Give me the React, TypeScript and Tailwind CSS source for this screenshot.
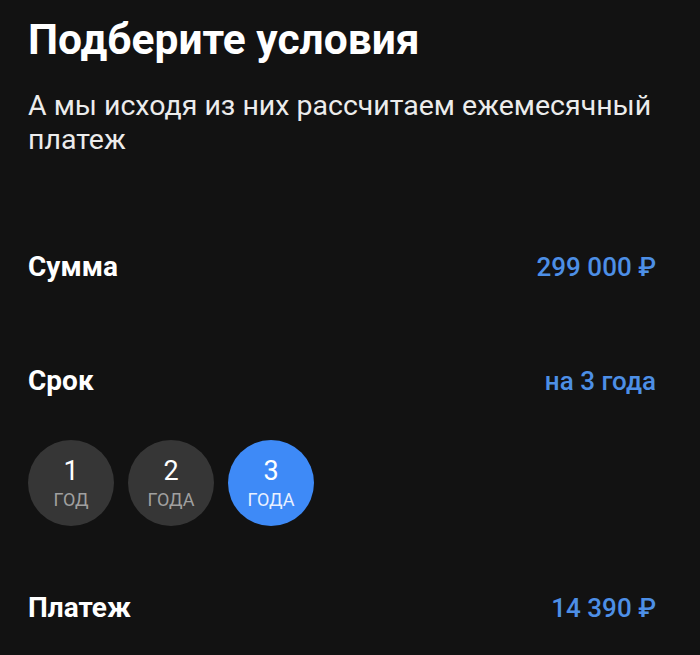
import { useState } from 'react';

const terms = [
    { value: 1, label: 'год' },
    { value: 2, label: 'года' },
    { value: 3, label: 'года' },
];

function Row({ label, value }: { label: string; value: string }) {
    return (
        <div className="flex items-center justify-between leading-[34px]">
            <span className="text-[28px] font-bold text-white">{label}</span>
            <span className="text-[26px] font-medium text-[#4d8fe6]">{value}</span>
        </div>
    );
}

export default function App() {
    const [term, setTerm] = useState(3);

    return (
        <div className="min-h-[655px] bg-[#121212] pl-[28px] pr-[44px] pt-[15px] text-white" style={{ fontFamily: 'Roboto, "Noto Sans", sans-serif' }}>
            <h1 className="text-[42.5px] font-bold leading-[50px]">Подберите условия</h1>
            <p className="mt-[24px] text-[28.5px] leading-[34px] text-[#ececec]">
                А мы исходя из них рассчитаем ежемесячный платеж
            </p>

            <div className="mt-[93px]">
                <Row label="Сумма" value="299 000 ₽" />
            </div>

            <div className="mt-[80px]">
                <Row label="Срок" value={`на ${term} ${term === 1 ? 'год' : 'года'}`} />
            </div>

            <div className="mt-[42px] flex gap-[14px]">
                {terms.map(t => (
                    <button
                        key={t.value}
                        type="button"
                        onClick={() => setTerm(t.value)}
                        className={`flex h-[86px] w-[86px] flex-col items-center justify-center rounded-full ${
                            term === t.value ? 'bg-[#3e8af7]' : 'bg-[#363636]'
                        }`}
                    >
                        <span className="text-[27px] leading-[30px] text-white">{t.value}</span>
                        <span className={`mt-[4px] text-[18px] uppercase leading-[20px] ${term === t.value ? 'text-[#e8f0ff]' : 'text-[#a0a0a0]'}`}>
                            {t.label}
                        </span>
                    </button>
                ))}
            </div>

            <div className="mt-[65px]">
                <Row label="Платеж" value="14 390 ₽" />
            </div>
        </div>
    );
}
